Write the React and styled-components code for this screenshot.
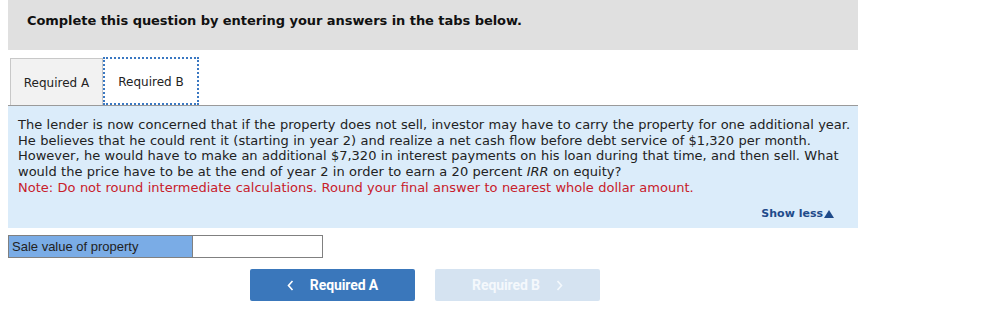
import React from "react";
import styled, { createGlobalStyle } from "styled-components";

const GlobalStyle = createGlobalStyle`
  body {
    margin: 0;
    background: #fff;
    font-family: "DejaVu Sans", Verdana, sans-serif;
  }
`;

const Page = styled.div`
  width: 850px;
  padding: 0 8px;
`;

const Header = styled.div`
  height: 50px;
  display: flex;
  align-items: center;
  padding: 0 19px 10px;
  box-sizing: border-box;
  background: #e0e0e0;
  font-size: 13px;
  font-weight: 700;
  letter-spacing: -0.05px;
  color: #111;
`;

const Tabs = styled.div`
  display: flex;
  align-items: flex-end;
  padding: 0 2px;
  margin-top: 6px;
  height: 49px;
`;

const Tab = styled.div`
  height: ${({ active }) => (active ? "48px" : "47px")};
  box-sizing: border-box;
  display: flex;
  align-items: center;
  justify-content: center;
  padding: 2px 0 0;
  font-size: 12px;
  color: #222;
  background: ${({ active }) => (active ? "#fff" : "#f2f2f2")};
  border: ${({ active }) => (active ? "2px dotted #3a78c2" : "1px solid #c8c8c8")};
  border-bottom: ${({ active }) => (active ? "2px dotted #3a78c2" : "none")};
  width: ${({ active }) => (active ? "96px" : "93px")};
`;

const Panel = styled.div`
  background: #dbecfa;
  border-top: 1px solid #9a9a9a;
  padding: 11px 6px 8px 10px;
  height: 123px;
  box-sizing: border-box;
  display: flex;
  flex-direction: column;
`;

const Question = styled.p`
  margin: 0;
  font-size: 13px;
  line-height: 15.7px;
  word-spacing: 0.25px;
  white-space: nowrap;
  color: #222;
`;

const Note = styled.span`
  color: #c8202a;
`;

const ShowLess = styled.div`
  margin-top: auto;
  align-self: flex-end;
  padding-right: 18px;
  font-size: 11px;
  font-weight: 700;
  color: #1f4b8a;
  display: flex;
  align-items: center;
  gap: 1px;
`;

const AnswerTable = styled.div`
  display: flex;
  margin-top: 7px;
  width: 315px;
  height: 23px;
  border: 1px solid #808080;
  box-sizing: border-box;
  font-family: "Liberation Sans", Arial, sans-serif;
  font-size: 13px;
`;

const Label = styled.div`
  width: 184px;
  flex-shrink: 0;
  box-sizing: border-box;
  background: #7aace6;
  border-right: 1px solid #808080;
  display: flex;
  align-items: center;
  padding-left: 3px;
  color: #222;
`;

const Input = styled.input`
  flex: 1;
  border: none;
  outline: none;
  min-width: 0;
  background: #fff;
`;

const Nav = styled.div`
  display: flex;
  gap: 20px;
  margin-top: 11px;
  padding-left: 242px;
`;

const NavButton = styled.button`
  width: 165px;
  height: 32px;
  border: none;
  border-radius: 2px;
  background: ${({ disabled }) => (disabled ? "#d5e3f1" : "#3a77bb")};
  color: ${({ disabled }) => (disabled ? "#f4f8fc" : "#fff")};
  font-family: Roboto, "Liberation Sans", sans-serif;
  font-weight: 700;
  font-size: 14px;
  letter-spacing: -0.1px;
  display: flex;
  align-items: center;
  justify-content: center;
  gap: 16px;
  padding: 0;
`;

const Chevron = ({ dir }) => (
  <svg width="7" height="11" viewBox="0 0 7 11">
    <path
      d={dir === "left" ? "M5.5 1 L1.5 5.5 L5.5 10" : "M1.5 1 L5.5 5.5 L1.5 10"}
      fill="none"
      stroke="currentColor"
      strokeWidth="1.6"
    />
  </svg>
);

const Triangle = () => (
  <svg width="10" height="8" viewBox="0 0 10 8">
    <path d="M5 0 L10 8 L0 8 Z" fill="currentColor" />
  </svg>
);

export default function App() {
  return (
    <>
      <GlobalStyle />
      <Page>
        <Header>Complete this question by entering your answers in the tabs below.</Header>
        <Tabs>
          <Tab>Required A</Tab>
          <Tab active>Required B</Tab>
        </Tabs>
        <Panel>
          <Question>
            The lender is now concerned that if the property does not sell, investor may have to carry the
            property for one additional year.
            <br />
            He believes that he could rent it (starting in year 2) and realize a net cash flow before debt
            service of $1,320 per month.
            <br />
            However, he would have to make an additional $7,320 in interest payments on his loan during that
            time, and then sell. What
            <br />
            would the price have to be at the end of year 2 in order to earn a 20 percent <i>IRR</i> on equity?
            <br />
            <Note>
              Note: Do not round intermediate calculations. Round your final answer to nearest whole dollar
              amount.
            </Note>
          </Question>
          <ShowLess>
            Show less
            <Triangle />
          </ShowLess>
        </Panel>
        <AnswerTable>
          <Label>Sale value of property</Label>
          <Input />
        </AnswerTable>
        <Nav>
          <NavButton>
            <Chevron dir="left" />
            Required A
          </NavButton>
          <NavButton disabled>
            Required B
            <Chevron dir="right" />
          </NavButton>
        </Nav>
      </Page>
    </>
  );
}
